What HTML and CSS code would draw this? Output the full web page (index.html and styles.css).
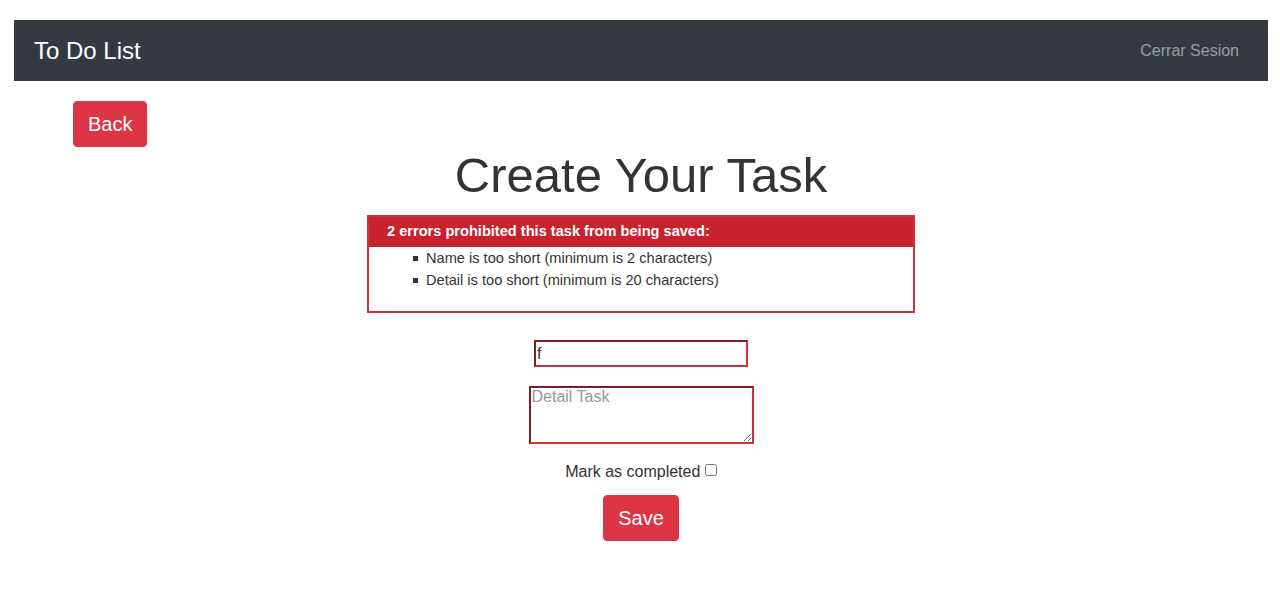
FILE: index.html
```html
<!DOCTYPE html>
<html lang="en">
<head>
<meta charset="utf-8">
<title>To Do List</title>
<link rel="stylesheet" href="styles.css">
</head>
<body>
<div class="page">
  <nav class="navbar">
    <a class="brand" href="#">To Do List</a>
    <a class="nav-link" href="#">Cerrar Sesion</a>
  </nav>
  <div class="back-row">
    <a class="btn btn-danger" href="#">Back</a>
  </div>
  <h1 class="title">Create Your Task</h1>
  <form class="task-form">
    <div class="error-box">
      <h2 class="error-head">2 errors prohibited this task from being saved:</h2>
      <ul class="error-list">
        <li>Name is too short (minimum is 2 characters)</li>
        <li>Detail is too short (minimum is 20 characters)</li>
      </ul>
    </div>
    <input class="field field-name" type="text" value="f">
    <textarea class="field field-detail" placeholder="Detail Task"></textarea>
    <label class="check-row">Mark as completed <input type="checkbox" class="check"></label>
    <button type="button" class="btn btn-danger btn-save">Save</button>
  </form>
</div>
</body>
</html>
```
FILE: styles.css
```css
html, body {
  margin: 0;
  padding: 0;
  background: #fff;
}
body {
  font-family: "Liberation Sans", Arial, sans-serif;
  color: #333;
}
.page {
  padding: 20px 12px 0 14px;
}
.navbar {
  display: flex;
  align-items: center;
  justify-content: space-between;
  height: 61px;
  padding: 0 29px 0 20px;
  background: #343a40;
}
.brand {
  color: #fff;
  font-size: 24px;
  text-decoration: none;
  line-height: 30px;
}
.nav-link {
  color: rgba(255, 255, 255, 0.5);
  font-size: 16px;
  text-decoration: none;
}
.back-row {
  margin-top: 20px;
  padding-left: 59px;
}
.btn {
  display: inline-block;
  font-family: inherit;
  font-size: 20px;
  line-height: 30px;
  padding: 7px 14px;
  border: 1px solid transparent;
  border-radius: 4px;
  text-decoration: none;
  cursor: pointer;
}
.btn-danger {
  background: #dc3545;
  border-color: #dc3545;
  color: #fff;
}
.title {
  margin: 0 0 11px;
  text-align: center;
  font-size: 49px;
  line-height: 57px;
  font-weight: 400;
  color: #333;
}
.task-form {
  display: flex;
  flex-direction: column;
  align-items: center;
}
.error-box {
  width: 548px;
  box-sizing: border-box;
  border: 2px solid #d0313f;
  margin-bottom: 27px;
}
.error-head {
  margin: 0;
  height: 30px;
  line-height: 29px;
  padding: 0 18px;
  background: #c9222f;
  color: #fff;
  font-size: 14.6px;
  font-weight: 700;
}
.error-list {
  margin: 0 0 20px;
  padding-left: 57px;
  list-style: none;
  font-size: 14.6px;
  line-height: 22px;
  color: #333;
}
.error-list li::before {
  content: "";
  display: inline-block;
  width: 5px;
  height: 5px;
  background: #333;
  margin-left: -13px;
  margin-right: 8px;
  vertical-align: 2px;
}
.field {
  box-sizing: border-box;
  border: 2px inset #d0303c;
  font-family: inherit;
  color: #333;
  background: #fff;
  margin: 0;
}
.field-name {
  width: 214px;
  height: 27px;
  padding: 1px 0 1px 1px;
  font-size: 16px;
}
.field-detail {
  display: block;
  width: 225px;
  height: 58px;
  margin-top: 19px;
  padding: 0 0 0 1px;
  font-size: 16px;
  line-height: 18px;
}
.field-detail::placeholder {
  color: #999;
}
.check-row {
  margin-top: 18px;
  font-size: 16px;
  line-height: 20px;
  color: #333;
}
.check {
  margin: 0;
  width: 12px;
  height: 12px;
  vertical-align: 1px;
}
.btn-save {
  margin-top: 13px;
}
```
